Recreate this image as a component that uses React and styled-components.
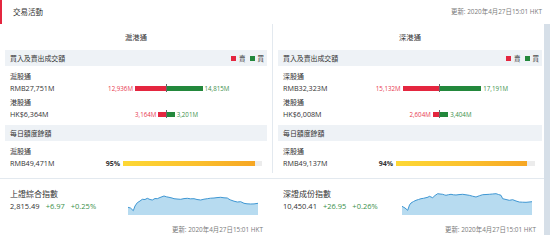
import React from "react";
import styled, { createGlobalStyle } from "styled-components";

const Global = createGlobalStyle`
  html, body { margin: 0; padding: 0; background: #ffffff; }
  body {
    font-family: "Open Sans", "Noto Sans CJK TC", sans-serif;
    color: #333;
    -webkit-font-smoothing: antialiased;
  }
`;

const RED = "#e4263f";
const GREEN = "#23883c";
const RED_TEXT = "#e8394f";
const GREEN_TEXT = "#3a8f4a";
const LINE = "#e3e9ef";

const Page = styled.div`
  width: 550px;
  height: 240px;
  overflow: hidden;
  background: #fff;
`;

const Header = styled.div`
  height: 24px;
  display: flex;
  align-items: center;
  justify-content: space-between;
  border-left: 2px solid ${RED};
  padding: 0 8px 0 11px;
  box-sizing: border-box;
`;

const Title = styled.div`
  font-size: 7.5px;
  line-height: 10px;
  color: #333;
`;

const Stamp = styled.div`
  font-size: 6.4px;
  line-height: 10px;
  color: #7a7a7a;
  text-align: right;
  margin-top: ${(p) => p.$top || 0}px;
`;

const Body = styled.div`
  width: 550px;
  box-sizing: border-box;
  border-right: 6px solid #d6dfe8;
  display: flex;
  flex-direction: column;
`;

const Columns = styled.div`
  display: flex;
  border-bottom: 1px solid ${LINE};
`;

const Column = styled.div`
  display: flex;
  flex-direction: column;
  box-sizing: border-box;
  margin-bottom: 5px;
  padding: ${(p) => (p.$first ? "0 5px 4px 5px" : "0 2px 4px 5px")};
  ${(p) => (p.$first ? `width: 273px; border-right: 1px solid ${LINE};` : "flex: 1;")}
`;

const ColTitle = styled.div`
  height: 26px;
  display: flex;
  align-items: center;
  justify-content: center;
  font-size: 7.3px;
  color: #333;
`;

const Band = styled.div`
  height: 16px;
  background: #eef2f6;
  display: flex;
  align-items: center;
  justify-content: space-between;
  padding: 0 3px 0 5px;
  margin-top: ${(p) => p.$top || 0}px;
  font-size: 6.9px;
  color: #333;
`;

const Legend = styled.div`
  display: flex;
  align-items: center;
  font-size: 6.5px;
  color: #333;
`;

const Swatch = styled.span`
  width: 5px;
  height: 5px;
  background: ${(p) => p.$color};
  margin: 0 3px 0 ${(p) => p.$gap || 0}px;
`;

const Item = styled.div`
  display: flex;
  flex-direction: column;
  padding: 0 5px;
  margin-top: ${(p) => p.$top || 0}px;
`;

const Label = styled.div`
  font-size: 7px;
  line-height: 11px;
  color: #333;
`;

const ValueRow = styled.div`
  display: flex;
  align-items: center;
  height: 12px;
`;

const Value = styled.div`
  width: 86px;
  flex: none;
  font-size: 7.2px;
  line-height: 12px;
  color: #333;
`;

const Half = styled.div`
  width: ${(p) => (p.$left ? "70px" : "auto")};
  flex: ${(p) => (p.$left ? "none" : "1")};
  display: flex;
  align-items: center;
  justify-content: ${(p) => (p.$left ? "flex-end" : "flex-start")};
`;

const Bar = styled.div`
  height: 5px;
  background: ${(p) => p.$color};
`;

const BarNum = styled.span`
  font-size: 6.2px;
  color: ${(p) => p.$color};
  margin: ${(p) => (p.$left ? "0 2px 0 0" : "0 0 0 2px")};
  white-space: nowrap;
`;

const Marker = styled.div`
  width: 1px;
  height: 8px;
  background: #666;
  flex: none;
`;

const Pct = styled.div`
  width: 24px;
  text-align: right;
  font-size: 7px;
  font-weight: 700;
  color: #333;
  margin-right: 3px;
`;

const Track = styled.div`
  width: 139px;
  height: 5px;
  background: #ececec;
  display: flex;
`;

const Fill = styled.div`
  height: 100%;
  background: linear-gradient(90deg, #fdd835 0%, #fbc02d 55%, #f6a623 100%);
`;

const IndexRow = styled.div`
  display: flex;
`;

const IndexCell = styled.div`
  box-sizing: border-box;
  display: flex;
  flex-direction: column;
  padding: 9px ${(p) => (p.$first ? 10 : 8)}px 0 10px;
  ${(p) => (p.$first ? "width: 273px;" : "flex: 1;")}
`;

const IndexTop = styled.div`
  display: flex;
  align-items: flex-end;
  justify-content: space-between;
  height: 27px;
`;

const Info = styled.div`
  align-self: flex-start;
  display: flex;
  flex-direction: column;
`;

const IndexName = styled.div`
  font-size: 8px;
  line-height: 12px;
  color: #333;
`;

const Quote = styled.div`
  display: flex;
  gap: 6px;
  font-size: 7.5px;
  line-height: 12px;
`;

const Num = styled.span`
  color: ${(p) => p.$color || "#333"};
`;

const ChartBox = styled.svg`
  width: 130px;
  height: 22px;
  margin-right: ${(p) => p.$mr}px;
  display: block;
`;

const SCALE = 0.0024;

function Flow({ label, value, sell, buy, top }) {
  return (
    <Item $top={top}>
      <Label>{label}</Label>
      <ValueRow>
        <Value>{value}</Value>
        <Half $left>
          <BarNum $left $color={RED_TEXT}>{sell.toLocaleString("en-US")}M</BarNum>
          <Bar $color={RED} style={{ width: sell * SCALE }} />
        </Half>
        <Marker />
        <Half>
          <Bar $color={GREEN} style={{ width: buy * SCALE }} />
          <BarNum $color={GREEN_TEXT}>{buy.toLocaleString("en-US")}M</BarNum>
        </Half>
      </ValueRow>
    </Item>
  );
}

function Quota({ label, value, pct, top }) {
  return (
    <Item $top={top}>
      <Label>{label}</Label>
      <ValueRow>
        <Value>{value}</Value>
        <Pct>{pct}%</Pct>
        <Track>
          <Fill style={{ width: `${pct}%` }} />
        </Track>
      </ValueRow>
    </Item>
  );
}

function Chart({ points, mr }) {
  const line = points.map(([x, y], i) => `${i ? "L" : "M"}${x} ${y}`).join(" ");
  const area = `${line} L130 22 L0 22 Z`;
  return (
    <ChartBox $mr={mr} viewBox="0 0 130 22" preserveAspectRatio="none">
      <path d={area} fill="#b7dbf0" />
      <path d={line} fill="none" stroke="#3f97d3" strokeWidth="1" />
    </ChartBox>
  );
}

const shPts = [
  [0, 14.3], [2.5, 15], [5.3, 17.7], [7, 13], [9.3, 9.7], [12, 8], [14.3, 6.3], [17, 6.5], [19.3, 5.3],
  [22, 6.5], [24.3, 7], [27, 5.5], [29.3, 5.7], [32, 4.5], [36, 3], [38.5, 3.8], [41, 4.3], [44, 5],
  [46, 5.7], [49, 6], [52.7, 6.3], [56, 5.6], [59.3, 5.3], [62.5, 5.8], [66, 5.7], [69, 6.5], [72.7, 7],
  [76, 6.2], [79.3, 5.7], [82.5, 5.2], [86, 5], [89, 4.6], [92.7, 4.3], [96, 4.8], [99.3, 5], [101, 6.2],
  [102.7, 7], [106, 8.2], [109.3, 9], [112.7, 8.7], [116, 10.3], [119, 10.8], [122.7, 11], [126, 10.9], [130, 10.3],
];

const szPts = [
  [0, 13.3], [3, 15], [5.7, 17.3], [7.5, 12], [9, 10], [11.5, 8.5], [14, 7.3], [16.5, 6.5], [19, 5.7],
  [21.5, 5.3], [24, 4.7], [26, 4.2], [27.3, 3.3], [29, 4], [30.7, 4.7], [33, 2.5], [35.7, 0.7], [38, 1],
  [40.7, 1.3], [42.5, 1.9], [44, 2.3], [46.5, 1.7], [49, 1.3], [51.5, 1.8], [54, 2], [57, 1.6], [60.7, 1.3],
  [64, 1.8], [67.3, 2.3], [70.5, 3.2], [74, 4], [77.5, 2.7], [80.7, 1.7], [84, 1.5], [87.3, 1.3], [90.5, 1],
  [94, 0.7], [96.5, 1.5], [99, 2.3], [100.7, 5.7], [104, 6.5], [107.3, 7.3], [110.7, 6.7], [114, 8],
  [117.3, 9], [120.5, 9.2], [124, 9.3], [127, 9], [130, 8.7],
];

export default function App() {
  return (
    <Page>
      <Global />
      <Header>
        <Title>交易活動</Title>
        <Stamp>更新: 2020年4月27日15:01 HKT</Stamp>
      </Header>
      <Body>
        <Columns>
          <Column $first>
            <ColTitle>滬港通</ColTitle>
            <Band>
              <span>買入及賣出成交額</span>
              <Legend>
                <Swatch $color={RED} />賣
                <Swatch $color={GREEN} $gap={4} />買
              </Legend>
            </Band>
            <Flow top={5} label="滬股通" value="RMB27,751M" sell={12936} buy={14815} />
            <Flow top={3} label="港股通" value="HK$6,364M" sell={3164} buy={3201} />
            <Band $top={5}>每日額度餘額</Band>
            <Quota top={5} label="滬股通" value="RMB49,471M" pct={95} />
          </Column>
          <Column>
            <ColTitle>深港通</ColTitle>
            <Band>
              <span>買入及賣出成交額</span>
              <Legend>
                <Swatch $color={RED} />賣
                <Swatch $color={GREEN} $gap={4} />買
              </Legend>
            </Band>
            <Flow top={5} label="深股通" value="RMB32,323M" sell={15132} buy={17191} />
            <Flow top={3} label="港股通" value="HK$6,008M" sell={2604} buy={3404} />
            <Band $top={5}>每日額度餘額</Band>
            <Quota top={5} label="深股通" value="RMB49,137M" pct={94} />
          </Column>
        </Columns>
        <IndexRow>
          <IndexCell $first>
            <IndexTop>
              <Info>
                <IndexName>上證綜合指數</IndexName>
                <Quote>
                  <Num>2,815.49</Num>
                  <Num $color={GREEN_TEXT}>+6.97</Num>
                  <Num $color={GREEN_TEXT}>+0.25%</Num>
                </Quote>
              </Info>
              <Chart points={shPts} mr={5} />
            </IndexTop>
            <Stamp $top={10}>更新: 2020年4月27日15:01 HKT</Stamp>
          </IndexCell>
          <IndexCell>
            <IndexTop>
              <Info>
                <IndexName>深證成份指數</IndexName>
                <Quote>
                  <Num>10,450.41</Num>
                  <Num $color={GREEN_TEXT}>+26.95</Num>
                  <Num $color={GREEN_TEXT}>+0.26%</Num>
                </Quote>
              </Info>
              <Chart points={szPts} mr={4} />
            </IndexTop>
            <Stamp $top={10}>更新: 2020年4月27日15:01 HKT</Stamp>
          </IndexCell>
        </IndexRow>
      </Body>
    </Page>
  );
}
